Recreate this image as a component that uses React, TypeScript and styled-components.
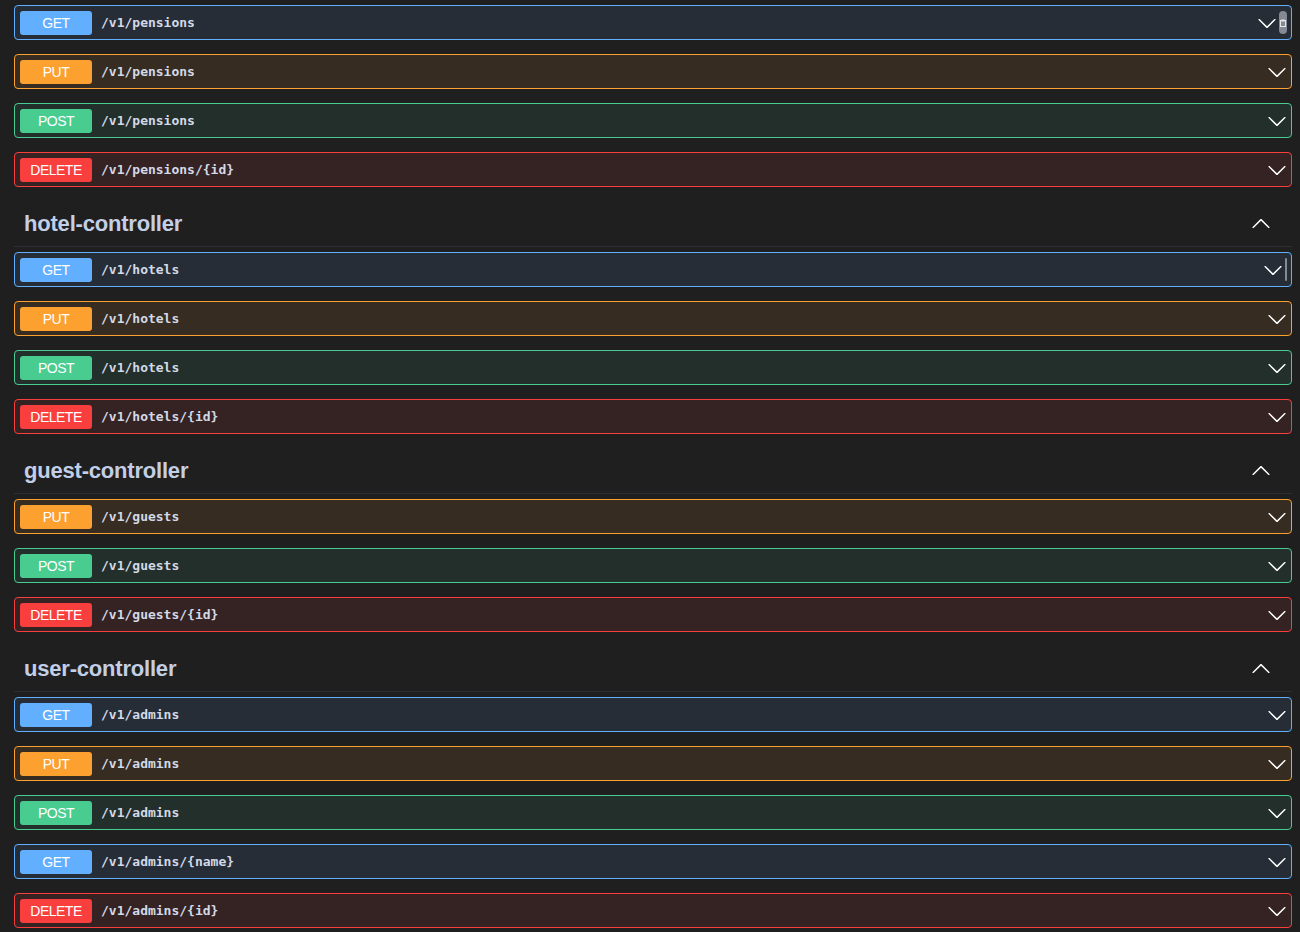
import React from "react";
import styled, { createGlobalStyle } from "styled-components";

type Method = "GET" | "PUT" | "POST" | "DELETE";

const COLORS: Record<Method, { border: string; bg: string }> = {
  GET: { border: "#61affe", bg: "#262d36" },
  PUT: { border: "#fca130", bg: "#362c21" },
  POST: { border: "#49cc90", bg: "#232f2a" },
  DELETE: { border: "#f93e3e", bg: "#352222" },
};

const Global = createGlobalStyle`
  html, body { margin: 0; padding: 0; background: #1f1f1f; }
  body { font-family: "Liberation Sans", Arial, sans-serif; }
`;

const Page = styled.div`
  background: #1f1f1f;
  padding: 5px 8px 0 14px;
  box-sizing: border-box;
  overflow: hidden;
  height: 932px;
`;

const Section = styled.section`
  display: flex;
  flex-direction: column;
`;

const TagHeader = styled.div`
  display: flex;
  align-items: center;
  justify-content: space-between;
  height: 44px;
  padding: 1px 21px 0 10px;
  border-bottom: 1px solid #2c2e33;
  margin-bottom: 5px;
`;

const TagTitle = styled.h3`
  margin: 0;
  font-family: "Liberation Sans", Arial, sans-serif;
  font-size: 22px;
  font-weight: 700;
  color: #c3cfe6;
  letter-spacing: -0.2px;
`;

const Row = styled.div<{ $method: Method }>`
  display: flex;
  align-items: center;
  height: 35px;
  box-sizing: border-box;
  padding: 0 4px 0 5px;
  margin-bottom: 14px;
  border: 1px solid ${(p) => COLORS[p.$method].border};
  background: ${(p) => COLORS[p.$method].bg};
  border-radius: 4px;
`;

const Badge = styled.span<{ $method: Method }>`
  display: inline-flex;
  align-items: center;
  justify-content: center;
  width: 72px;
  height: 24px;
  border-radius: 3px;
  background: ${(p) => COLORS[p.$method].border};
  color: #ffffff;
  font-family: "Liberation Sans", Arial, sans-serif;
  font-size: 14px;
  font-weight: 400;
  letter-spacing: -0.5px;
  flex-shrink: 0;
`;

const Path = styled.span`
  margin-left: 9px;
  flex: 1;
  font-family: "DejaVu Sans Mono", "Liberation Mono", monospace;
  font-size: 13px;
  font-weight: 600;
  color: #d3d9e6;
`;

const Chevron = styled.svg`
  width: 20px;
  height: 20px;
  flex-shrink: 0;
  fill: #ffffff;
`;

const CopyPill = styled.span<{ $w: number }>`
  display: inline-flex;
  align-items: center;
  justify-content: center;
  width: ${(p) => p.$w}px;
  height: 23px;
  margin-left: 2px;
  border-radius: ${(p) => (p.$w > 4 ? 4 : 1)}px;
  background: #848994;
  flex-shrink: 0;
  overflow: hidden;
`;

const DownArrow = () => (
  <Chevron viewBox="0 0 20 20">
    <path d="M17.418 6.109c.272-.268.709-.268.979 0s.271.701 0 .969l-7.908 7.83c-.27.268-.707.268-.979 0l-7.908-7.83c-.27-.268-.27-.701 0-.969.271-.268.709-.268.979 0L10 13.25l7.418-7.141z" />
  </Chevron>
);

const UpArrow = () => (
  <Chevron viewBox="0 0 20 20">
    <path d="M17.418 13.891c.272.268.709.268.979 0s.271-.701 0-.969l-7.908-7.83c-.27-.268-.707-.268-.979 0l-7.908 7.83c-.27.268-.27.701 0 .969.271.268.709.268.979 0L10 6.75l7.418 7.141z" />
  </Chevron>
);

type Op = { method: Method; path: string; copy?: number };

const Operation = ({ method, path, copy }: Op) => (
  <Row $method={method}>
    <Badge $method={method}>{method}</Badge>
    <Path>{path}</Path>
    <DownArrow />
    {copy ? (
      <CopyPill $w={copy}>
        {copy > 4 && (
          <svg width="6" height="8" viewBox="0 0 6 8">
            <rect x="0.5" y="1.5" width="5" height="6" fill="none" stroke="#e8e8e8" strokeWidth="1" />
            <rect x="1.5" y="0.5" width="3" height="2" fill="#e8e8e8" />
          </svg>
        )}
      </CopyPill>
    ) : null}
  </Row>
);

const sections: { tag?: string; ops: Op[] }[] = [
  {
    ops: [
      { method: "GET", path: "/v1/pensions", copy: 8 },
      { method: "PUT", path: "/v1/pensions" },
      { method: "POST", path: "/v1/pensions" },
      { method: "DELETE", path: "/v1/pensions/{id}" },
    ],
  },
  {
    tag: "hotel-controller",
    ops: [
      { method: "GET", path: "/v1/hotels", copy: 2 },
      { method: "PUT", path: "/v1/hotels" },
      { method: "POST", path: "/v1/hotels" },
      { method: "DELETE", path: "/v1/hotels/{id}" },
    ],
  },
  {
    tag: "guest-controller",
    ops: [
      { method: "PUT", path: "/v1/guests" },
      { method: "POST", path: "/v1/guests" },
      { method: "DELETE", path: "/v1/guests/{id}" },
    ],
  },
  {
    tag: "user-controller",
    ops: [
      { method: "GET", path: "/v1/admins" },
      { method: "PUT", path: "/v1/admins" },
      { method: "POST", path: "/v1/admins" },
      { method: "GET", path: "/v1/admins/{name}" },
      { method: "DELETE", path: "/v1/admins/{id}" },
    ],
  },
];

export default function App() {
  return (
    <>
      <Global />
      <Page>
        {sections.map((s, i) => (
          <Section key={i}>
            {s.tag && (
              <TagHeader>
                <TagTitle>{s.tag}</TagTitle>
                <UpArrow />
              </TagHeader>
            )}
            {s.ops.map((o, j) => (
              <Operation key={j} {...o} />
            ))}
          </Section>
        ))}
      </Page>
    </>
  );
}
